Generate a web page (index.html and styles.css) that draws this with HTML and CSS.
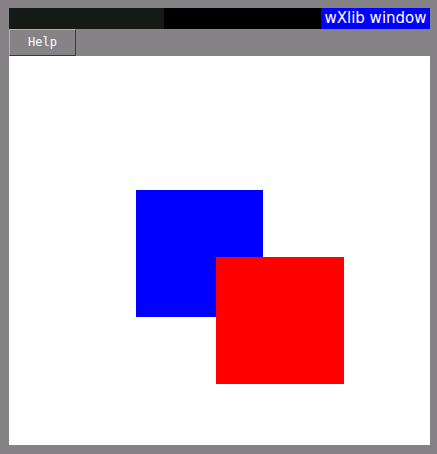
FILE: index.html
```html
<!DOCTYPE html>
<html>
<head>
<meta charset="utf-8">
<link rel="stylesheet" href="styles.css">
</head>
<body>
<div class="frame">
  <div class="titlebar">
    <div class="seg seg-dark"></div>
    <div class="seg seg-black"></div>
    <div class="seg seg-title">wXlib window</div>
  </div>
  <div class="menubar">
    <div class="menu-btn">Help</div>
  </div>
  <div class="canvas">
    <svg class="drawing" width="421" height="389" viewBox="0 0 421 389">
      <rect x="127" y="134" width="127" height="127" fill="#0000ff"/>
      <rect x="207" y="201" width="128" height="127" fill="#ff0000"/>
    </svg>
  </div>
</div>
</body>
</html>
```

FILE: styles.css
```css
html, body {
  margin: 0;
  padding: 0;
  background: #858385;
}
.frame {
  width: 421px;
  padding: 8px 7px 9px 9px;
  display: flex;
  flex-direction: column;
}
.titlebar {
  display: flex;
  height: 21px;
}
.seg { height: 100%; }
.seg-dark { width: 155px; background: #161a17; }
.seg-black { width: 157px; background: #000000; }
.seg-title {
  flex: 1;
  background: #0000ff;
  color: #ffffff;
  font-family: "DejaVu Sans", sans-serif;
  font-size: 15px;
  line-height: 21px;
  text-align: center;
  white-space: nowrap;
  overflow: hidden;
}
.menubar {
  display: flex;
  height: 27px;
}
.menu-btn {
  box-sizing: border-box;
  width: 67px;
  height: 27px;
  border-top: 1px solid #b0b0b0;
  border-left: 1px solid #b0b0b0;
  border-right: 1px solid #3a3a3a;
  border-bottom: 1px solid #3a3a3a;
  color: #ffffff;
  font-family: "DejaVu Sans Mono", monospace;
  font-size: 12px;
  line-height: 25px;
  text-align: center;
}
.canvas {
  width: 421px;
  height: 389px;
  background: #ffffff;
}
.drawing { display: block; }
```
